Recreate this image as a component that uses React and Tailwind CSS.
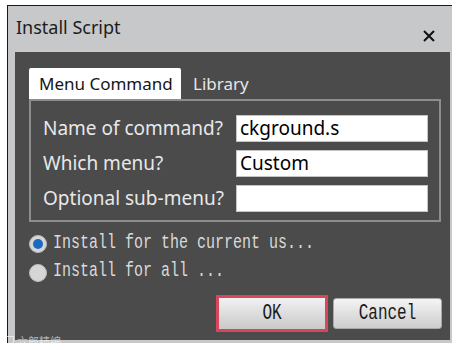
import { useState } from 'react';

const SANS = { fontFamily: '"Noto Sans", "Open Sans", sans-serif' };
const MONO = { fontFamily: '"Liberation Mono", "DejaVu Sans Mono", monospace' };

const FIELDS = [
  { label: 'Name of command?', value: 'ckground.s' },
  { label: 'Which menu?', value: 'Custom' },
  { label: 'Optional sub-menu?', value: '' },
];

function Radio({ checked }) {
  return (
    <span className="w-[18px] h-[18px] rounded-full bg-[#d6d6d6] border border-[#bdbdbd] flex items-center justify-center shrink-0">
      {checked && <span className="w-[10px] h-[10px] rounded-full bg-[#1b6ac2]" />}
    </span>
  );
}

export default function App() {
  const [mode, setMode] = useState('current');

  return (
    <div className="w-[457px] h-[350px] bg-white relative overflow-hidden pt-[5px] pl-[7px]">
      {/* Dialog frame */}
      <div className="w-[445px] h-[338px] bg-[#c7c8ca] border-l border-t border-[#1a1a1a] flex flex-col pl-[7px] pr-[2px] pb-[3px]">
        {/* Title bar */}
        <div className="h-[46px] flex items-start justify-between shrink-0">
          <span className="pl-[1px] pt-[11px] text-[18px] leading-[20px] text-[#1c1c1c]" style={SANS}>
            Install Script
          </span>
          <svg className="mt-[24px] mr-[15px]" width="12" height="12" viewBox="0 0 12 12">
            <path d="M1 1 L11 11 M11 1 L1 11" stroke="#111" strokeWidth="2" />
          </svg>
        </div>

        {/* Body */}
        <div className="flex-1 bg-[#4b4b4b] flex flex-col pt-[16px]">
          {/* Tabs */}
          <div className="flex items-end ml-[14px] h-[31px]">
            <div className="w-[152px] h-[31px] bg-white rounded-t-[2px] pl-[10px] flex items-center text-[17px] text-[#161616]" style={SANS}>
              Menu Command
            </div>
            <div className="h-[31px] pl-[12px] flex items-center text-[17px] text-[#e6e6e6]" style={SANS}>
              Library
            </div>
          </div>

          {/* Panel */}
          <div className="ml-[14px] mr-[9px] border-2 border-[#8d8d8d] pt-[14px] pb-[8px] pl-[12px] flex flex-col gap-[8px]">
            {FIELDS.map(f => (
              <div key={f.label} className="flex items-center h-[27px]">
                <span className="w-[193px] shrink-0 text-[19px] leading-[27px] text-[#e8e8e8] whitespace-nowrap" style={SANS}>
                  {f.label}
                </span>
                <div className="w-[192px] shrink-0 h-[27px] bg-white border border-[#c4c4c4] pl-[3px] overflow-hidden text-[19px] leading-[25px] text-black" style={SANS}>
                  {f.value}
                </div>
              </div>
            ))}
          </div>

          {/* Install options */}
          <div className="flex flex-col ml-[14px] mt-[13px] gap-[10px]">
            <button onClick={() => setMode('current')} className="flex items-center gap-[6px] h-[18px]">
              <Radio checked={mode === 'current'} />
              <span className="text-[15px] text-[#dadada] scale-y-[1.35] origin-center whitespace-pre" style={MONO}>
                Install for the current us...
              </span>
            </button>
            <button onClick={() => setMode('all')} className="flex items-center gap-[6px] h-[19px]">
              <Radio checked={mode === 'all'} />
              <span className="text-[15px] text-[#dadada] scale-y-[1.35] origin-center whitespace-pre" style={MONO}>
                Install for all ...
              </span>
            </button>
          </div>

          {/* Buttons */}
          <div className="flex justify-end items-center gap-[5px] pr-[8px] mt-[13px]">
            <div className="w-[112px] h-[37px] border-[3px] border-[#d8465c] flex">
              <button className="flex-1 bg-gradient-to-b from-[#f2f2f2] to-[#c9c9c9] text-[16px] text-[#1a1a1a]" style={MONO}>
                <span className="inline-block scale-y-[1.35]">OK</span>
              </button>
            </div>
            <button className="w-[109px] h-[31px] rounded-[3px] border border-[#a9a9a9] bg-gradient-to-b from-[#f4f4f4] to-[#cdcdcd] text-[16px] text-[#1a1a1a]" style={MONO}>
              <span className="inline-block scale-y-[1.35]">Cancel</span>
            </button>
          </div>
        </div>
      </div>

      {/* Watermark */}
      <div className="absolute left-[4px] bottom-[1px] flex items-center gap-[3px] text-[11px] text-white/60" style={{ fontFamily: '"Noto Sans CJK SC", sans-serif' }}>
        <span className="w-[10px] h-[10px] border border-white/60" />
        <span>六郎精编</span>
      </div>
    </div>
  );
}
